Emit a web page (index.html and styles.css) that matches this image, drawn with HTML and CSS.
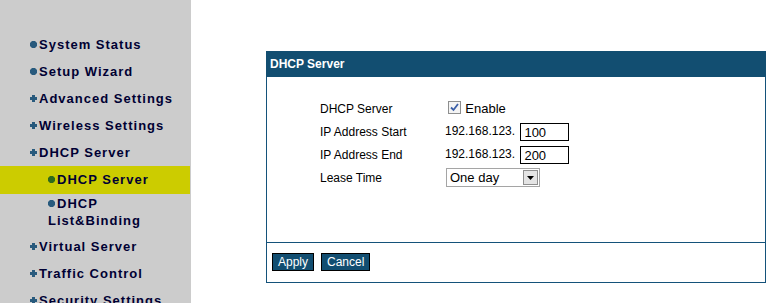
FILE: index.html
```html
<!DOCTYPE html>
<html lang="en">
<head>
    <meta charset="UTF-8">
    <title>DHCP Server</title>
    <link rel="stylesheet" href="styles.css">
</head>
<body>
    <div class="sidebar">
        <ul class="menu">
            <li class="item"><svg class="dot" viewBox="0 0 7 7"><path d="M2 0h3l2 2v3l-2 2h-3l-2-2v-3z"/></svg>System Status</li>
            <li class="item"><svg class="dot" viewBox="0 0 7 7"><path d="M2 0h3l2 2v3l-2 2h-3l-2-2v-3z"/></svg>Setup Wizard</li>
            <li class="item"><svg class="dot" viewBox="0 0 7 7"><path d="M2 0h3v2h2v3h-2v2h-3v-2h-2v-3h2z"/></svg>Advanced Settings</li>
            <li class="item"><svg class="dot" viewBox="0 0 7 7"><path d="M2 0h3v2h2v3h-2v2h-3v-2h-2v-3h2z"/></svg>Wireless Settings</li>
            <li class="item"><svg class="dot" viewBox="0 0 7 7"><path d="M2 0h3v2h2v3h-2v2h-3v-2h-2v-3h2z"/></svg>DHCP Server</li>
            <li class="sub active"><svg class="dot" viewBox="0 0 7 7"><path d="M2 0h3l2 2v3l-2 2h-3l-2-2v-3z"/></svg>DHCP Server</li>
            <li class="sub wrap"><svg class="dot" viewBox="0 0 7 7"><path d="M2 0h3l2 2v3l-2 2h-3l-2-2v-3z"/></svg>DHCP List&amp;Binding</li>
            <li class="item"><svg class="dot" viewBox="0 0 7 7"><path d="M2 0h3v2h2v3h-2v2h-3v-2h-2v-3h2z"/></svg>Virtual Server</li>
            <li class="item"><svg class="dot" viewBox="0 0 7 7"><path d="M2 0h3v2h2v3h-2v2h-3v-2h-2v-3h2z"/></svg>Traffic Control</li>
            <li class="item"><svg class="dot" viewBox="0 0 7 7"><path d="M2 0h3v2h2v3h-2v2h-3v-2h-2v-3h2z"/></svg>Security Settings</li>
        </ul>
    </div>

    <div class="main">
        <div class="panel">
            <div class="panel-title">DHCP Server</div>
            <div class="panel-body">
                <table class="form">
                    <tr>
                        <td class="label">DHCP Server</td>
                        <td>
                            <span class="check">
                                <svg viewBox="0 0 13 13" width="13" height="13">
                                    <rect x="0.5" y="0.5" width="12" height="12" fill="#f4f4f4" stroke="#8e8f8f"/>
                                    <path d="M3 6.5l2.5 2.5 4.5-6" fill="none" stroke="#3b5fa8" stroke-width="1.8"/>
                                </svg>
                            </span>
                            <span class="enable">Enable</span>
                        </td>
                    </tr>
                    <tr>
                        <td class="label">IP Address Start</td>
                        <td>192.168.123. <input type="text" class="octet" value="100"></td>
                    </tr>
                    <tr>
                        <td class="label">IP Address End</td>
                        <td>192.168.123. <input type="text" class="octet" value="200"></td>
                    </tr>
                    <tr>
                        <td class="label">Lease Time</td>
                        <td>
                            <div class="select">
                                <select>
                                    <option>One day</option>
                                </select>
                                <span class="arrow"><svg viewBox="0 0 7 4" width="7" height="4"><path d="M0 0h7l-3.5 4z"/></svg></span>
                            </div>
                        </td>
                    </tr>
                </table>
            </div>
            <div class="panel-foot">
                <button type="button" class="btn">Apply</button>
                <button type="button" class="btn">Cancel</button>
            </div>
        </div>
    </div>
</body>
</html>
```

FILE: styles.css
```css
html, body {
    margin: 0;
    padding: 0;
    height: 100%;
    background: #ffffff;
}
body {
    display: flex;
    font-family: 'Liberation Sans', Arial, sans-serif;
}
.sidebar {
    width: 191px;
    flex-shrink: 0;
    background-color: #cccccc;
    height: 100%;
    overflow: hidden;
}
.menu {
    list-style: none;
    margin: 0;
    padding: 31px 0 0 0;
}
.menu li {
    font-size: 13px;
    font-weight: bold;
    letter-spacing: 1px;
    color: #000033;
}
.item {
    height: 27px;
    line-height: 27px;
    padding-left: 30px;
    white-space: nowrap;
}
.sub {
    padding-left: 48px;
    padding-right: 8px;
    line-height: 28px;
}
.sub.wrap {
    line-height: 17px;
    padding-top: 1px;
    padding-bottom: 4px;
}
.sub.active {
    background-color: #cccc00;
    margin-right: 1px;
}
.dot {
    width: 7px;
    height: 7px;
    margin-right: 2px;
    fill: #285a7d;
    vertical-align: 1px;
}
.active .dot {
    fill: #2e6a1c;
}
.main {
    flex: 1;
    padding: 51px 0 0 75px;
}
.panel {
    width: 500px;
    box-sizing: border-box;
    border: 1px solid #14527a;
    border-top: none;
}
.panel-title {
    background-color: #124e71;
    color: #ffffff;
    font-size: 12px;
    font-weight: bold;
    height: 26px;
    line-height: 26px;
    padding-left: 4px;
    margin: 0 -1px;
}
.panel-body {
    height: 145px;
    padding-top: 20px;
}
.form {
    border-collapse: collapse;
    margin-left: 53px;
    font-size: 12px;
    color: #000000;
}
.form td {
    height: 23px;
    padding: 0;
    vertical-align: middle;
    white-space: nowrap;
}
.form .label {
    width: 125px;
}
.check {
    display: inline-block;
    margin-left: 3px;
    vertical-align: -3px;
}
.enable {
    font-size: 13px;
    margin-left: 1px;
    vertical-align: -2px;
}
.octet {
    width: 49px;
    height: 18px;
    box-sizing: border-box;
    border: 1px solid #000000;
    padding: 1px 3px 0;
    margin: 0 0 0 2px;
    font-family: 'Liberation Sans', Arial, sans-serif;
    font-size: 13px;
    vertical-align: middle;
}
.select {
    display: inline-flex;
    width: 94px;
    height: 19px;
    box-sizing: border-box;
    border: 1px solid #a5a5a5;
    margin-left: 1px;
    vertical-align: middle;
}
.select select {
    appearance: none;
    -webkit-appearance: none;
    flex: 1;
    min-width: 0;
    border: none;
    background: #ffffff;
    padding: 0 0 0 3px;
    font-family: 'Liberation Sans', Arial, sans-serif;
    font-size: 13px;
    color: #000000;
    outline: none;
}
.arrow {
    width: 15px;
    margin: 1px;
    box-sizing: border-box;
    border: 1px solid #8f8f8f;
    background: #e4e4e4;
    display: flex;
    align-items: center;
    justify-content: center;
}
.arrow svg {
    fill: #000000;
}
.panel-foot {
    border-top: 1px solid #14527a;
    padding: 10px 0 11px 5px;
    display: flex;
    gap: 7px;
}
.btn {
    height: 18px;
    box-sizing: border-box;
    background-color: #124e71;
    color: #ffffff;
    border: 1px solid #000000;
    font-family: 'Liberation Sans', Arial, sans-serif;
    font-size: 12px;
    padding: 0 5px;
    line-height: 16px;
    cursor: pointer;
}
```
